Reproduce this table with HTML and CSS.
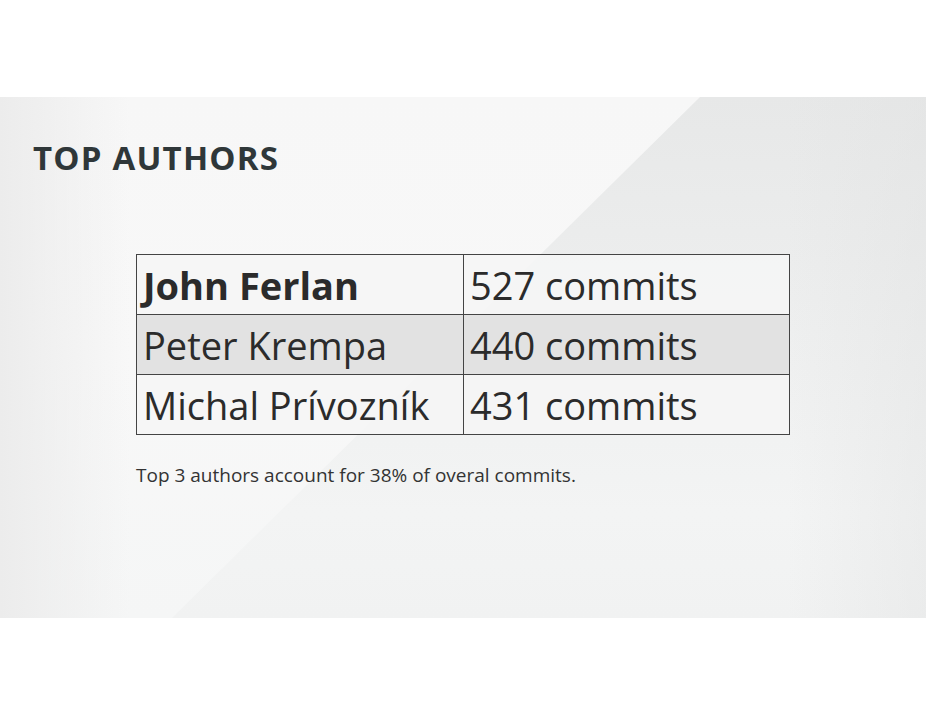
FILE: index.html
```html
<!DOCTYPE html>
<html>
<head>
<meta charset="utf-8">
<link rel="stylesheet" href="styles.css">
</head>
<body>
<div class="page">
  <section class="slide">
    <div class="sheen"></div>
    <h1 class="title">TOP AUTHORS</h1>
    <table class="authors">
      <tr class="row row-light"><td class="name name-bold">John Ferlan</td><td class="count">527 commits</td></tr>
      <tr class="row row-dark"><td class="name">Peter Krempa</td><td class="count">440 commits</td></tr>
      <tr class="row row-light"><td class="name">Michal Prívozník</td><td class="count">431 commits</td></tr>
    </table>
    <p class="note">Top 3 authors account for 38% of overal commits.</p>
  </section>
</div>
</body>
</html>
```
FILE: styles.css
```css
html, body {
  margin: 0;
  padding: 0;
  background: #ffffff;
}
.page {
  width: 926px;
  height: 716px;
  padding-top: 97px;
  box-sizing: border-box;
}
.slide {
  position: relative;
  height: 521px;
  overflow: hidden;
  background:
    linear-gradient(90deg, rgba(225,225,225,0.5) 0%, rgba(240,240,240,0) 15%, rgba(240,240,240,0) 85%, rgba(225,226,226,0.4) 100%),
    linear-gradient(180deg, #e7e8e8 0%, #eeefef 45%, #f3f4f4 80%, #f1f2f2 100%);
  padding: 43px 0 0 33px;
  box-sizing: border-box;
  font-family: "Open Sans", "Liberation Sans", sans-serif;
}
.sheen {
  position: absolute;
  inset: 0;
  clip-path: polygon(0 0, 700px 0, 172px 521px, 0 521px);
  background:
    linear-gradient(90deg, rgba(236,236,236,1) 0%, rgba(244,244,244,0) 14%),
    linear-gradient(180deg, #f7f7f7 0%, #f8f8f8 50%, #f5f6f6 100%);
  pointer-events: none;
}
.title {
  position: relative;
  margin: 0;
  font-size: 33px;
  font-weight: 700;
  letter-spacing: 1.2px;
  color: #2f3739;
  line-height: 36px;
}
.authors {
  position: relative;
  margin: 78px 0 0 103px;
  border-collapse: collapse;
  width: 654px;
}
.row td {
  border: 1.5px solid #444;
  height: 59px;
  padding: 0 0 0 6px;
  font-size: 38px;
  color: #2b2b2b;
  font-weight: 400;
  line-height: 58px;
  white-space: nowrap;
}
.row-light td { background: rgba(246,246,246,0.85); }
.row-dark td { background: #e2e2e2; }
.name { width: 320px; }
.name-bold { font-weight: 700 !important; }
.note {
  position: relative;
  margin: 27px 0 0 103px;
  font-size: 19px;
  letter-spacing: 0;
  color: #333;
}
```
